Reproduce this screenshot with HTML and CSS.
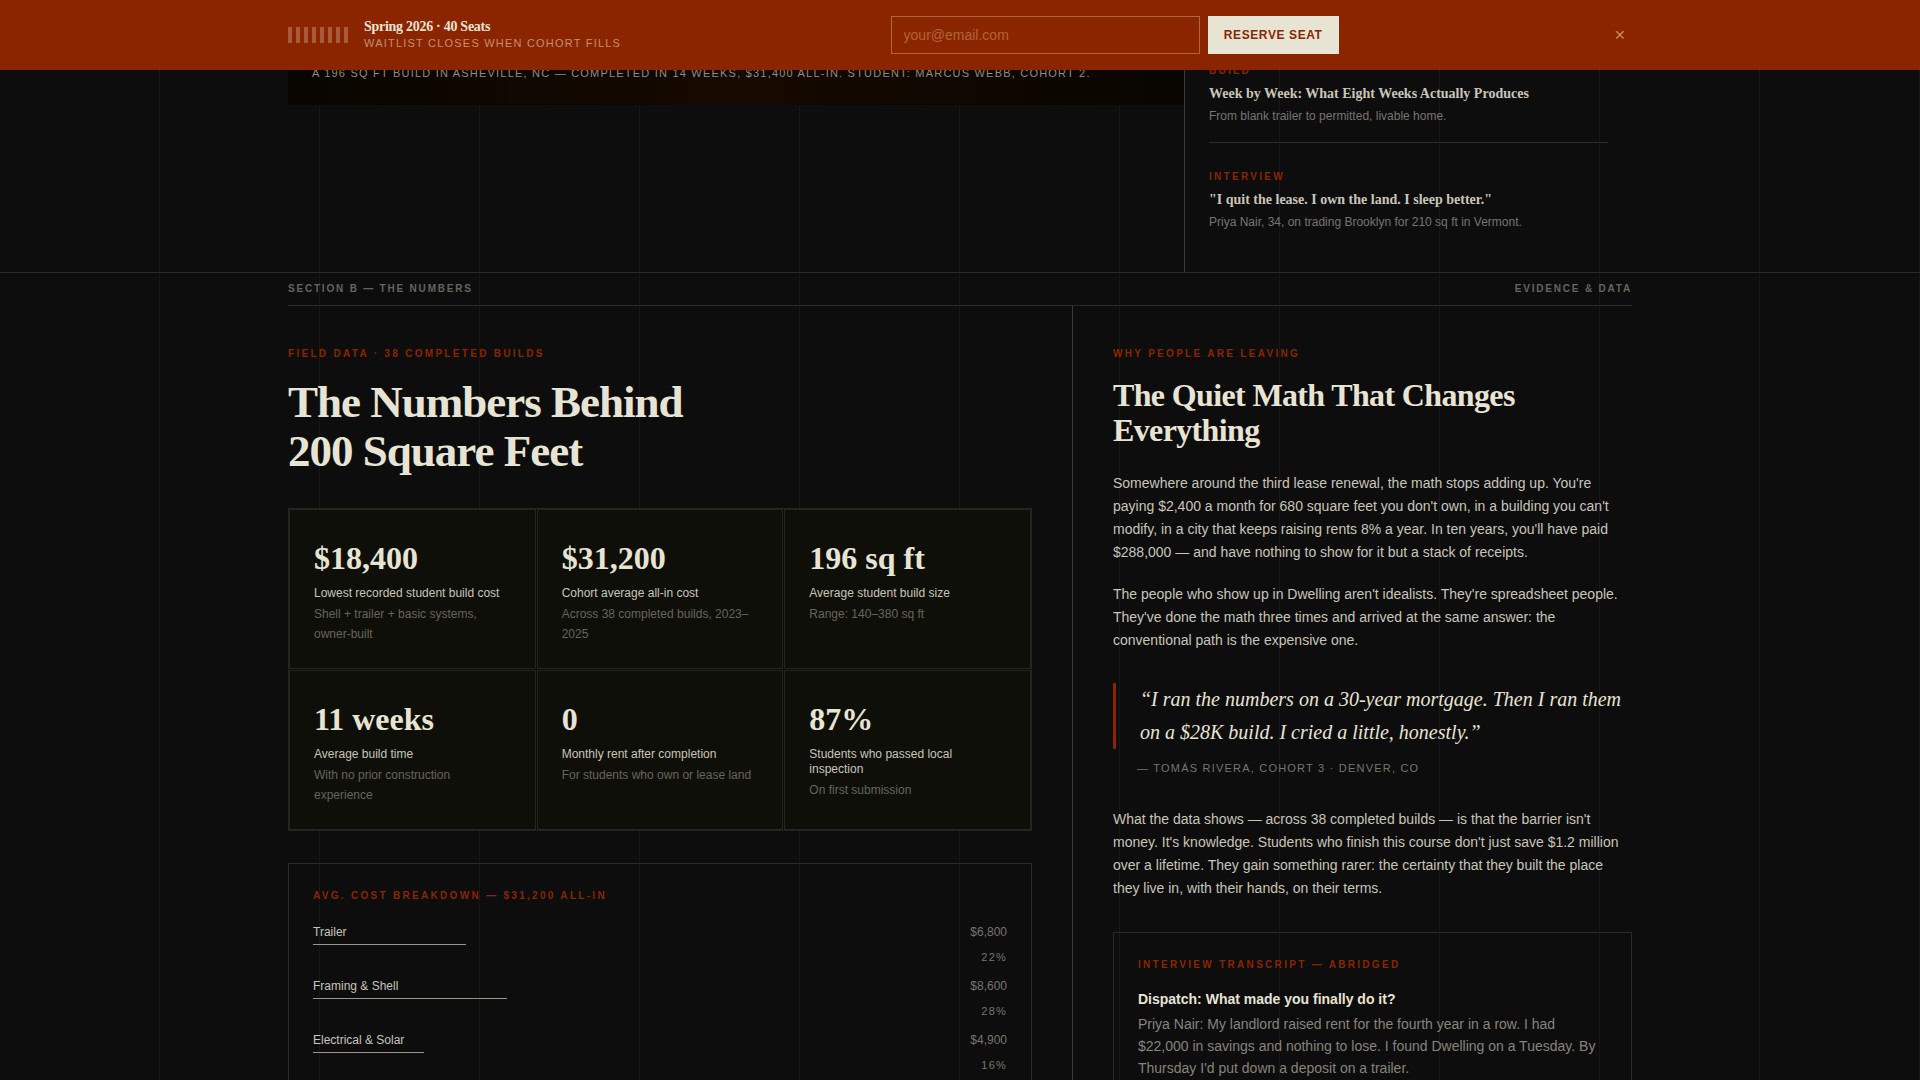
FILE: index.html
```html
<!DOCTYPE html>
<html lang="en">
<head>
    <meta charset="UTF-8">
    <meta name="viewport" content="width=device-width, initial-scale=1.0">
    <title>Dwelling</title>
    <link rel="stylesheet" href="styles.css">
</head>
<body>
    <!-- Waitlist bar -->
    <div class="seat-bar">
        <div class="wrap seat-inner">
            <div class="seat-info">
                <div class="ticks">
                    <span></span><span></span><span></span><span></span><span></span><span></span><span></span><span></span>
                </div>
                <div>
                    <p class="seat-title">Spring 2026 · 40 Seats</p>
                    <p class="caps seat-note">Waitlist closes when cohort fills</p>
                </div>
            </div>
            <form class="seat-form">
                <input type="email" placeholder="your@email.com" aria-label="Email address">
                <button type="submit">Reserve Seat</button>
            </form>
            <button class="close-btn" type="button" aria-label="Close">✕</button>
        </div>
    </div>

    <!-- Section A -->
    <section class="section-a">
        <div class="wrap grid-a">
            <div>
                <figure class="hero">
                    <figcaption class="caps">A 196 sq ft build in Asheville, NC — completed in 14 weeks, $31,400 all-in. Student: Marcus Webb, Cohort 2.</figcaption>
                </figure>
            </div>
            <aside class="sidebar">
                <article class="story">
                    <p class="eyebrow">Build</p>
                    <h3>Week by Week: What Eight Weeks Actually Produces</h3>
                    <p class="story-text">From blank trailer to permitted, livable home.</p>
                </article>
                <article class="story">
                    <p class="eyebrow">Interview</p>
                    <h3>"I quit the lease. I own the land. I sleep better."</h3>
                    <p class="story-text">Priya Nair, 34, on trading Brooklyn for 210 sq ft in Vermont.</p>
                </article>
            </aside>
        </div>
    </section>

    <!-- Section B -->
    <section class="section-b">
        <div class="wrap">
            <div class="section-head">
                <span>Section B — The Numbers</span>
                <span>Evidence &amp; Data</span>
            </div>
            <div class="grid-b">
                <div class="col-data">
                    <p class="eyebrow">Field Data · 38 Completed Builds</p>
                    <h2 class="title-big">The Numbers Behind<br>200 Square Feet</h2>

                    <div class="stats">
                        <div class="stat">
                            <p class="stat-value">$18,400</p>
                            <p class="stat-label">Lowest recorded student build cost</p>
                            <p class="stat-note">Shell + trailer + basic systems, owner-built</p>
                        </div>
                        <div class="stat">
                            <p class="stat-value">$31,200</p>
                            <p class="stat-label">Cohort average all-in cost</p>
                            <p class="stat-note">Across 38 completed builds, 2023–2025</p>
                        </div>
                        <div class="stat">
                            <p class="stat-value">196 sq ft</p>
                            <p class="stat-label">Average student build size</p>
                            <p class="stat-note">Range: 140–380 sq ft</p>
                        </div>
                        <div class="stat">
                            <p class="stat-value">11 weeks</p>
                            <p class="stat-label">Average build time</p>
                            <p class="stat-note">With no prior construction experience</p>
                        </div>
                        <div class="stat">
                            <p class="stat-value">0</p>
                            <p class="stat-label">Monthly rent after completion</p>
                            <p class="stat-note">For students who own or lease land</p>
                        </div>
                        <div class="stat">
                            <p class="stat-value">87%</p>
                            <p class="stat-label">Students who passed local inspection</p>
                            <p class="stat-note">On first submission</p>
                        </div>
                    </div>

                    <div class="panel">
                        <p class="eyebrow">Avg. Cost Breakdown — $31,200 All-In</p>
                        <div class="cost">
                            <div class="cost-row"><span>Trailer</span><span class="amount">$6,800</span></div>
                            <div class="cost-bar" style="width: 22%"></div>
                            <p class="cost-pct">22%</p>
                        </div>
                        <div class="cost">
                            <div class="cost-row"><span>Framing &amp; Shell</span><span class="amount">$8,600</span></div>
                            <div class="cost-bar" style="width: 28%"></div>
                            <p class="cost-pct">28%</p>
                        </div>
                        <div class="cost">
                            <div class="cost-row"><span>Electrical &amp; Solar</span><span class="amount">$4,900</span></div>
                            <div class="cost-bar" style="width: 16%"></div>
                            <p class="cost-pct">16%</p>
                        </div>
                    </div>
                </div>

                <div class="col-story">
                    <p class="eyebrow">Why People Are Leaving</p>
                    <h2 class="title-mid">The Quiet Math That Changes Everything</h2>
                    <p class="body-text">Somewhere around the third lease renewal, the math stops adding up. You're paying $2,400 a month for 680 square feet you don't own, in a building you can't modify, in a city that keeps raising rents 8% a year. In ten years, you'll have paid $288,000 — and have nothing to show for it but a stack of receipts.</p>
                    <p class="body-text">The people who show up in Dwelling aren't idealists. They're spreadsheet people. They've done the math three times and arrived at the same answer: the conventional path is the expensive one.</p>
                    <blockquote>“I ran the numbers on a 30-year mortgage. Then I ran them on a $28K build. I cried a little, honestly.”</blockquote>
                    <p class="caps cite">— Tomás Rivera, Cohort 3 · Denver, CO</p>
                    <p class="body-text">What the data shows — across 38 completed builds — is that the barrier isn't money. It's knowledge. Students who finish this course don't just save $1.2 million over a lifetime. They gain something rarer: the certainty that they built the place they live in, with their hands, on their terms.</p>

                    <div class="panel transcript">
                        <p class="eyebrow">Interview Transcript — Abridged</p>
                        <p class="question">Dispatch: What made you finally do it?</p>
                        <p class="answer">Priya Nair: My landlord raised rent for the fourth year in a row. I had $22,000 in savings and nothing to lose. I found Dwelling on a Tuesday. By Thursday I'd put down a deposit on a trailer.</p>
                    </div>
                </div>
            </div>
        </div>
    </section>
</body>
</html>
```
FILE: styles.css
```css
* {
    margin: 0;
    padding: 0;
    box-sizing: border-box;
}
body {
    font-family: "Liberation Sans", Arial, sans-serif;
    font-size: 14px;
    line-height: 23px;
    color: #c8c5ba;
    background: #0d0d0d repeating-linear-gradient(90deg, transparent 0, transparent 159px, #171717 159px, #171717 160px);
}
.wrap {
    max-width: 1440px;
    margin: 0 auto;
    padding: 0 48px;
}
.caps {
    font-size: 11px;
    line-height: 16px;
    letter-spacing: 0.11em;
    text-transform: uppercase;
}
.eyebrow {
    font-size: 10px;
    line-height: 16px;
    font-weight: bold;
    letter-spacing: 0.23em;
    text-transform: uppercase;
    color: #8b2500;
}

/* Waitlist bar */
.seat-bar {
    position: fixed;
    top: 0;
    left: 0;
    right: 0;
    z-index: 10;
    background: #8b2500;
    padding: 16px 0;
}
.seat-inner {
    display: flex;
    align-items: center;
    justify-content: space-between;
}
.seat-info {
    display: flex;
    align-items: center;
    gap: 16px;
}
.ticks {
    display: flex;
    gap: 4px;
}
.ticks span {
    width: 4px;
    height: 16px;
    background: #a85b3a;
}
.seat-title {
    font-family: "Liberation Serif", "Times New Roman", serif;
    font-size: 14px;
    line-height: 16px;
    font-weight: bold;
    letter-spacing: -0.02em;
    color: #e8e4d4;
}
.seat-note {
    color: #c38f70;
}
.seat-form {
    display: flex;
    flex: 0 1 448px;
    gap: 8px;
}
.seat-form input {
    flex: 1;
    min-width: 0;
    height: 38px;
    padding: 0 12px;
    background: transparent;
    border: 1px solid #b0653c;
    font-family: inherit;
    font-size: 14px;
    color: #e8e4d4;
}
.seat-form input::placeholder {
    color: #b0653c;
}
.seat-form button {
    height: 38px;
    padding: 0 16px;
    border: none;
    background: #e8e4d4;
    color: #8b2500;
    font-family: inherit;
    font-size: 12px;
    font-weight: bold;
    letter-spacing: 0.05em;
    text-transform: uppercase;
    cursor: pointer;
}
.close-btn {
    width: 24px;
    border: none;
    background: none;
    color: #c38f60;
    font-family: inherit;
    font-size: 14px;
    cursor: pointer;
}

/* Section A */
.grid-a {
    display: grid;
    grid-template-columns: 2fr 1fr;
}
.hero {
    height: 105px;
    padding: 24px;
    display: flex;
    align-items: flex-end;
    background: linear-gradient(90deg, #080500 0%, #160900 50%, #080500 100%);
}
.hero figcaption {
    color: #8f8c80;
}
.sidebar {
    border-left: 1px solid #3a3a38;
    padding: 31px 24px 16px;
}
.story {
    padding: 32px 0 16px;
}
.story + .story {
    border-top: 1px solid #2a2a28;
    padding: 26px 0 24px;
}
.story h3 {
    font-family: "Liberation Serif", "Times New Roman", serif;
    font-size: 14px;
    line-height: 20px;
    margin: 5px 0 2px;
}
.story-text {
    font-size: 12px;
    line-height: 20px;
    color: #77756f;
}

/* Section B */
.section-b {
    border-top: 1px solid #2a2a28;
}
.section-head {
    display: flex;
    justify-content: space-between;
    padding: 8px 0;
    border-bottom: 1px solid #2a2a28;
    font-size: 10px;
    line-height: 16px;
    font-weight: bold;
    letter-spacing: 0.18em;
    text-transform: uppercase;
    color: #66645f;
}
.grid-b {
    display: grid;
    grid-template-columns: 7fr 5fr;
}
.col-data {
    padding: 40px 40px 40px 0;
}
.col-story {
    border-left: 1px solid #3a3a38;
    padding: 40px 0 40px 40px;
}
.title-big,
.title-mid {
    font-family: "Liberation Serif", "Times New Roman", serif;
    color: #e8e4d4;
}
.title-big {
    font-size: 45px;
    line-height: 49px;
    letter-spacing: -1px;
    margin: 16px 0 32px;
}
.title-mid {
    font-size: 32px;
    line-height: 35px;
    letter-spacing: -0.02em;
    margin: 16px 0 24px;
}

/* Stats */
.stats {
    display: grid;
    grid-template-columns: repeat(3, 1fr);
    gap: 1px;
    border: 1px solid #252520;
    background: #0b0b07;
    margin-bottom: 32px;
}
.stat {
    border: 1px solid #252520;
    background: #0f0f09;
    padding: 32px 24px 24px;
}
.stat-value {
    font-family: "Liberation Serif", "Times New Roman", serif;
    font-size: 32px;
    line-height: 32px;
    font-weight: bold;
    color: #e8e4d4;
    margin-bottom: 12px;
}
.stat-label {
    font-size: 12px;
    line-height: 15px;
    margin-bottom: 3px;
}
.stat-note {
    font-size: 12px;
    line-height: 20px;
    color: #66645c;
}

/* Panels */
.panel {
    border: 1px solid #2a2a28;
    padding: 24px;
}
.panel .eyebrow {
    margin-bottom: 15px;
}
.cost {
    padding: 3px 0 6px;
}
.cost-row {
    display: flex;
    justify-content: space-between;
    font-size: 12px;
    line-height: 20px;
}
.amount {
    color: #77756f;
}
.cost-bar {
    height: 1px;
    margin: 2px 0;
    background: #98958c;
}
.cost-pct {
    font-size: 11px;
    line-height: 20px;
    letter-spacing: 0.11em;
    text-align: right;
    color: #77756f;
}

/* Story column */
.body-text {
    margin-bottom: 19px;
}
blockquote {
    margin-top: 31px;
    border-left: 3px solid #8b2500;
    padding-left: 24px;
    font-family: "Liberation Serif", "Times New Roman", serif;
    font-size: 20px;
    line-height: 33px;
    font-style: italic;
    color: #e8e4d4;
}
.cite {
    margin: 11px 0 32px;
    padding-left: 24px;
    color: #77756f;
}
.transcript {
    margin-top: 32px;
}
.question {
    font-weight: bold;
    color: #e8e4d4;
    margin-bottom: 2px;
}
.answer {
    line-height: 22px;
    color: #86847c;
}
```
